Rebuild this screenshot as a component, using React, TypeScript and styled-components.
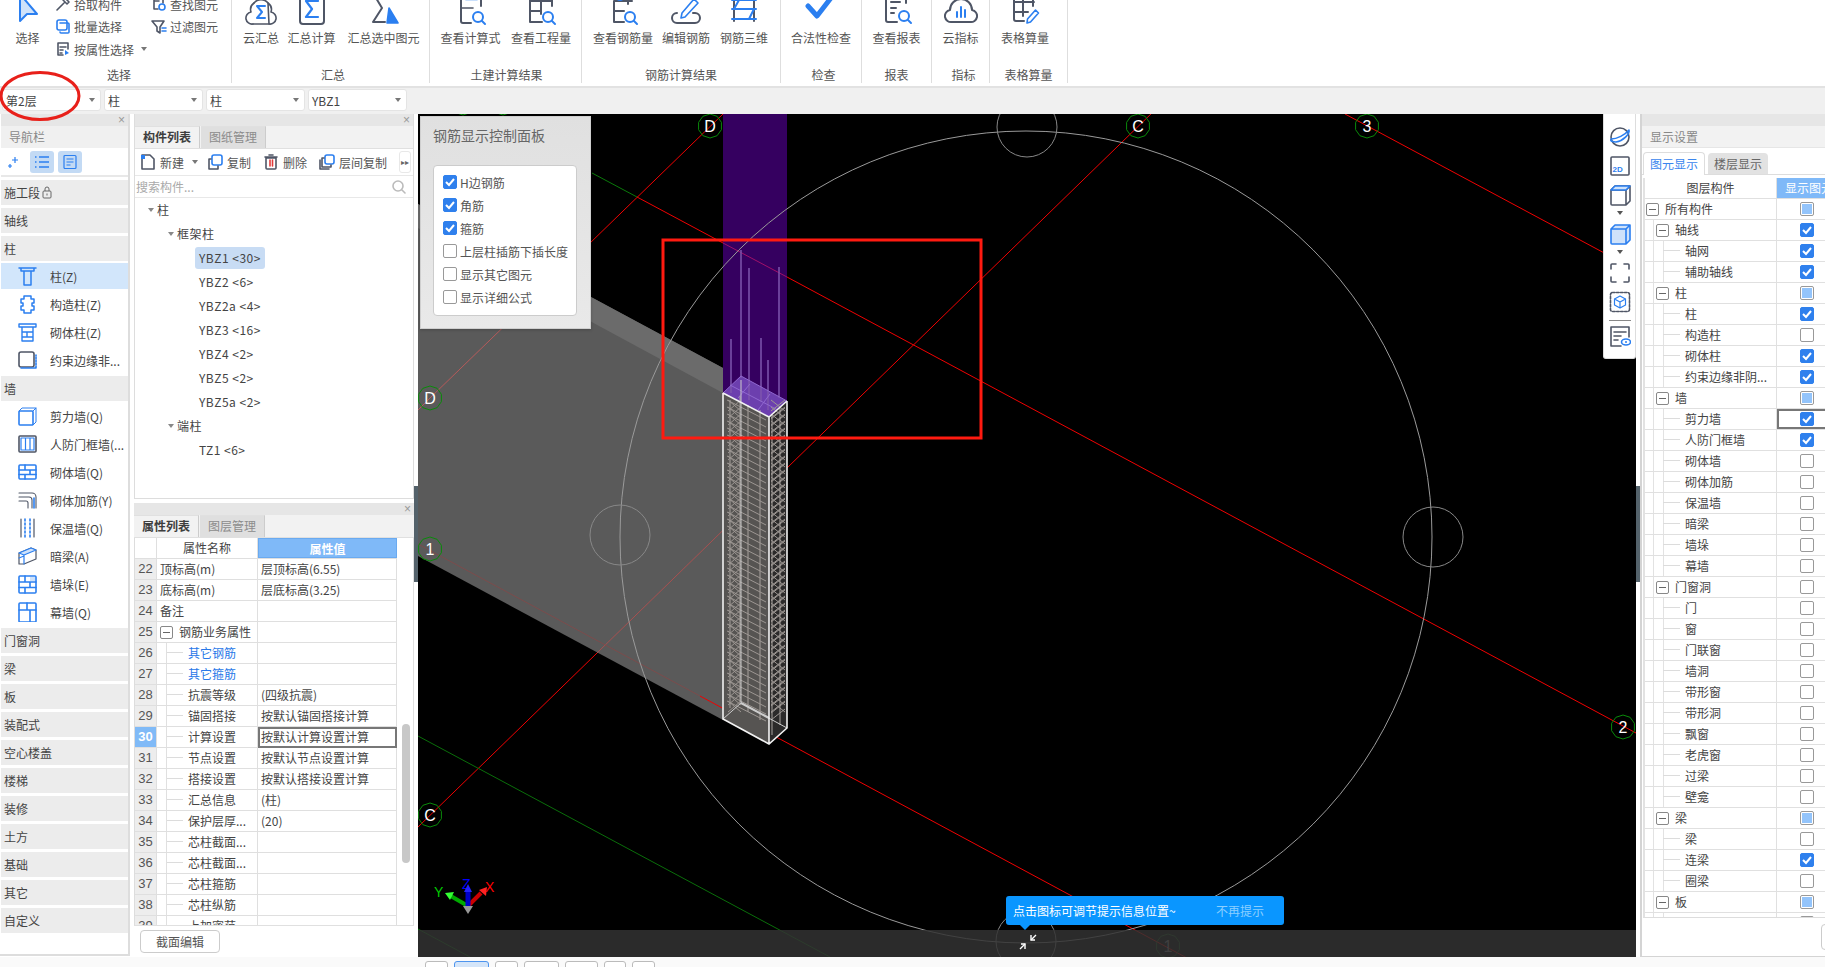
import React from 'react';
import styled, { createGlobalStyle } from 'styled-components';

const DK = '#4f5666';
const BL = '#2b7ff0';
const LB = '#cfe2fa';

const Global = createGlobalStyle`
  html, body { margin: 0; padding: 0; background: #fff; overflow: hidden; }
  * { box-sizing: border-box; }
  body { font-family: "Noto Sans CJK SC", "Liberation Sans", sans-serif; font-size: 12px; color: #4a4a4a; }
`;

const Page = styled.div`
  position: relative; width: 1825px; height: 967px; overflow: hidden;
  display: flex; flex-direction: column; background: #fff;
`;

/* ---------- ribbon ---------- */
const Ribbon = styled.div`
  height: 88px; flex: none; display: flex; background: #fff; border-bottom: 2px solid #e2e2e2; overflow: hidden;
`;
const Group = styled.div<{ $w: number }>`
  width: ${p => p.$w}px; height: 83px; flex: none; display: flex; flex-direction: column; border-right: 1px solid #dedede;
`;
const GroupBody = styled.div<{ $pl?: number }>`
  height: 66px; display: flex; padding-left: ${p => p.$pl ?? 0}px;
`;
const GroupLabel = styled.div<{ $pl?: number }>`
  height: 17px; line-height: 17px; text-align: center; color: #555; padding-left: ${p => p.$pl ?? 0}px;
`;
const BigBtn = styled.div<{ $w: number }>`
  width: ${p => p.$w}px; flex: none; display: flex; flex-direction: column; align-items: center;
`;
const BigIcon = styled.div`
  height: 28px; display: flex; align-items: flex-end; justify-content: center; padding-bottom: 2px;
`;
const BigText = styled.div`
  height: 20px; line-height: 20px; color: #555; white-space: nowrap;
`;
const SmallCol = styled.div<{ $w: number }>`
  width: ${p => p.$w}px; flex: none; margin-top: -7px; display: flex; flex-direction: column;
`;
const SmallRow = styled.div`
  height: 22.6px; display: flex; align-items: center; gap: 3px; color: #555; white-space: nowrap;
`;
const Caret = styled.i`
  display: inline-block; width: 0; height: 0; border: 3px solid transparent; border-top: 4px solid #777; border-bottom: 0;
`;
const SmallCaret = styled(Caret)`
  margin-left: 4px;
`;

/* ---------- selectors ---------- */
const SelectBar = styled.div`
  height: 26px; flex: none; display: flex; align-items: center; gap: 3px; padding: 0 0 2px 2px; background: #f0f0f0;
`;
const Select = styled.div`
  width: 99px; height: 22px; padding: 0 5px 0 3px; display: flex; align-items: center; justify-content: space-between;
  background: #fff; border: 1px solid #e4e4e4; border-radius: 3px; color: #444;
`;
const Annotation = styled.svg`
  position: absolute; left: 0; top: 70px; pointer-events: none;
`;

/* ---------- main ---------- */
const Main = styled.div`
  height: 843px; flex: none; display: flex; background: #fff;
`;
const CloseStrip = styled.div`
  height: 12px; flex: none; background: #e6e6e6; display: flex; align-items: center; justify-content: flex-end; padding-right: 3px;
  color: #999; font-size: 12px; line-height: 12px; font-family: "Liberation Sans", sans-serif;
`;
const NavPanel = styled.div`
  width: 130px; flex: none; display: flex; flex-direction: column; border-right: 2px solid #ddd; border-bottom: 2px solid #ddd; height: 842px; padding-left: 1px;
`;
const NavTitle = styled.div`
  height: 22px; flex: none; padding-left: 8px; line-height: 21px; background: #f0f0f0; color: #888;
`;
const NavTools = styled.div`
  height: 28px; flex: none; margin-top: 1px; display: flex; align-items: center; gap: 4px; padding-left: 1px; border-bottom: 2px solid #e8e8e8;
`;
const NavTool = styled.div<{ $on?: boolean }>`
  width: 24px; height: 22px; border-radius: 3px; display: flex; align-items: center; justify-content: center;
  background: ${p => (p.$on ? '#c3daf4' : 'transparent')};
`;
const NavList = styled.div`
  display: flex; flex-direction: column;
`;
const NavGroup = styled.div`
  height: 25px; margin-top: 3px; padding-left: 3px; line-height: 25px; background: #ececec; color: #444; display: flex; align-items: center; gap: 2px;
`;
const NavItem = styled.div<{ $on?: boolean }>`
  height: 26px; margin-top: 2px; display: flex; align-items: center; gap: 13px; padding-left: 17px;
  background: ${p => (p.$on ? '#d2e6fb' : 'transparent')}; color: #444; white-space: nowrap;
`;
const NavGlyph = styled.div`
  width: 19px; height: 20px; flex: none; display: flex; align-items: center; justify-content: center;
`;

const MidCol = styled.div`
  width: 280px; flex: none; margin-left: 4px; display: flex; flex-direction: column;
`;
const TreePanel = styled.div`
  height: 385px; flex: none; display: flex; flex-direction: column; border-left: 1px solid #ddd; border-right: 1px solid #ddd; border-bottom: 1px solid #ddd;
`;
const Tabs = styled.div`
  height: 23px; flex: none; display: flex; gap: 1px; background: #f2f2f2; border-bottom: 1px solid #e0e0e0;
`;
const Tab = styled.div<{ $on?: boolean }>`
  width: 65px; text-align: center; line-height: 20px; font-weight: ${p => (p.$on ? 700 : 400)};
  color: ${p => (p.$on ? '#3e3e3e' : '#8c8c8c')}; background: ${p => (p.$on ? '#f2f2f2' : '#dfdfdf')};
  border-right: 1px solid #ccc; border-top: 1px solid #e0e0e0;
`;
const TreeTools = styled.div`
  height: 27px; flex: none; display: flex; align-items: center; padding-left: 5px; position: relative; border-bottom: 1px solid #e8e8e8;
`;
const TreeTool = styled.div<{ $w: number }>`
  width: ${p => p.$w}px; flex: none; display: flex; align-items: center; gap: 4px; color: #555;
`;
const MoreBtn = styled.div`
  margin-left: 8px; width: 12px; height: 22px; border: 1px solid #e8e8e8; border-radius: 3px; background: #fff;
  display: flex; align-items: center; justify-content: center; font-size: 8px; color: #666; font-family: "DejaVu Sans", sans-serif;
`;
const SearchRow = styled.div`
  height: 22px; flex: none; display: flex; align-items: center; justify-content: space-between; padding: 0 6px 0 1px; color: #aaa; border-bottom: 1px solid #e8e8e8;
`;
const TreeBody = styled.div`
  margin-top: -1px; display: flex; flex-direction: column; align-items: flex-start;
`;
const TreeRow = styled.div<{ $l: number; $on?: boolean }>`
  height: 22px; margin-top: 2px; line-height: 22px; display: flex; align-items: center; white-space: nowrap; letter-spacing: .5px;
  margin-left: ${p => p.$l}px; padding: 0 ${p => (p.$on ? 4 : 0)}px; border-radius: 3px; background: ${p => (p.$on ? '#c8dcf4' : 'transparent')}; color: #444;
`;
const TreeCaret = styled(Caret)`
  margin-right: 3px; border-width: 4px 3.5px 0; border-top-color: #888;
`;
const PropPanel = styled.div`
  margin-top: 4px; flex: 1; display: flex; flex-direction: column; min-height: 0; border-bottom: 0;
`;
const PropTableWrap = styled.div`
  position: relative; height: 388px; flex: none; overflow: hidden; border: 1px solid #e0e0e0; border-top: 0; border-left: 1px solid #ddd;
`;
const HeadRow = styled.div`
  display: flex; height: 21px; width: 262px; line-height: 20px; border-bottom: 1px solid #dfdfdf;
`;
const Num = styled.div<{ $on?: boolean }>`
  width: 22px; flex: none; text-align: center; background: ${p => (p.$on ? '#80baf7' : '#ededed')};
  color: ${p => (p.$on ? '#fff' : '#555')}; font-weight: ${p => (p.$on ? 700 : 400)}; border-right: 1px solid #dfdfdf; font-family: "Liberation Sans", sans-serif; font-size: 13px;
`;
const HeadNum = styled(Num)`
  background: #fff;
`;
const NameCell = styled.div`
  width: 101px; flex: none; position: relative; display: flex; align-items: center; padding-left: 3px; border-right: 1px solid #dfdfdf; white-space: nowrap; color: #444;
`;
const HeadName = styled(NameCell)`
  justify-content: center; padding: 0;
`;
const ValueCell = styled.div<{ $on?: boolean }>`
  flex: 1; min-width: 0; padding-left: 3px; white-space: nowrap; color: #444; border-right: 1px solid #dfdfdf;
  ${p => p.$on && 'outline: 2px solid #777; outline-offset: -2px; height: 21px;'}
`;
const HeadValue = styled.div`
  flex: 1; text-align: center; background: #7fb9f8; color: #fff; font-weight: 700; border: 1px solid #6aaaf0;
`;
const PropRowBox = styled.div`
  display: flex; width: 262px; height: 21px; line-height: 20px; border-bottom: 1px solid #dfdfdf;
`;
const Box = styled.span`
  width: 13px; height: 13px; flex: none; border: 1px solid #888; border-radius: 2px; background: #fff; display: inline-flex; align-items: center; justify-content: center;
  &::after { content: ''; width: 7px; height: 1px; background: #666; }
`;
const PropBox = styled(Box)`
  margin-right: 6px;
`;
const Tick = styled.span`
  position: absolute; left: 9px; top: 0; bottom: 0; width: 17px; border-left: 1px solid #e0e0e0;
  &::after { content: ''; position: absolute; left: 0; top: 9px; width: 16px; border-top: 1px solid #dcdcdc; }
`;
const ChildName = styled.span<{ $blue?: boolean }>`
  margin-left: 28px; color: ${p => (p.$blue ? '#2878e8' : '#444')};
`;
const ScrollThumb = styled.div`
  position: absolute; right: 3px; top: 186px; width: 8px; height: 139px; border-radius: 4px; background: #c8c8c8;
`;
const BtnBar = styled.div`
  height: 30px; flex: none; padding: 4px 0 0 6px;
`;
const GhostBtn = styled.div`
  width: 80px; height: 23px; line-height: 21px; text-align: center; background: #fff; border: 1px solid #ccc; border-radius: 4px; color: #555;
`;

const Splitter = styled.div`
  width: 4px; flex: none; background: #fff; display: flex; align-items: flex-start; position: relative;
`;
const SplitHandle = styled.div`
  position: absolute; left: 0; top: 372px; width: 4px; height: 96px; background: #54626b;
`;

const Canvas = styled.div`
  width: 1218px; flex: none; position: relative; background: #000; overflow: hidden;
`;
const Scene = styled.svg`
  position: absolute; inset: 0; display: block;
`;
const Band = styled.div`
  position: absolute; left: 0; right: 0; bottom: 0; height: 27px; background: rgba(50, 50, 50, .85);
`;
const ControlPanel = styled.div`
  position: absolute; left: 2px; top: 2px; width: 171px; height: 213px; padding: 8px 13px 0 12px;
  background: linear-gradient(180deg, #e0e0e0, #e9e9e9); border: 1px solid #cfcfcf; box-shadow: 0 1px 3px rgba(0, 0, 0, .2);
`;
const PanelTitle = styled.div`
  font-size: 14px; line-height: 20px; color: #666;
`;
const CheckBoxList = styled.div`
  margin-top: 20px; height: 151px; padding: 6px 0 0 9px; background: #fff; border: 1px solid #ccc; border-radius: 4px;
  display: flex; flex-direction: column; gap: 3px;
`;
const CheckRow = styled.div`
  height: 20px; display: flex; align-items: center; gap: 3px; white-space: nowrap; color: #555;
`;
const CheckBox = styled.span<{ $s: 'on' | 'off' | 'half' }>`
  width: 14px; height: 14px; flex: none; display: inline-flex; align-items: center; justify-content: center; border-radius: 2px;
  background: ${p => (p.$s === 'on' ? '#2f80ed' : '#fff')}; border: 1px solid ${p => (p.$s === 'on' ? '#2f80ed' : '#999')};
  ${p => p.$s === 'half' && '&::after { content: ""; width: 10px; height: 10px; background: #93c4fb; }'}
`;
const Tip = styled.div`
  position: absolute; left: 588px; top: 782px; width: 278px; height: 29px; padding: 0 20px 0 7px; display: flex; align-items: center; justify-content: space-between;
  background: #0a96ff; border-radius: 3px; color: #fff; white-space: nowrap;
  &::after { content: ''; position: absolute; left: 14px; bottom: -5px; border: 5px solid transparent; border-top: 5px solid #0a96ff; border-bottom: 0; }
`;
const TipMute = styled.span`
  color: #8ccfff;
`;
const ViewBar = styled.div`
  position: absolute; right: 0; top: 0; width: 33px; height: 245px; padding-top: 12px; display: flex; flex-direction: column; align-items: center;
  background: #fff; border: 1px solid #ddd; border-top: 0; border-radius: 0 0 3px 3px;
`;
const ViewBtn = styled.div`
  height: 22px; width: 100%; margin-bottom: 7px; display: flex; align-items: center; justify-content: center;
`;
const ViewCaret = styled(Caret)`
  margin: -2px 0 8px; flex: none; border-width: 4px 3.5px 0; border-top-color: #555;
`;
const ViewRule = styled.div`
  width: 22px; height: 1px; margin: 0 0 4px; flex: none; background: #888;
`;

const RightPanel = styled.div`
  width: 185px; flex: none; height: 843px; display: flex; flex-direction: column; border-left: 2px solid #d4d4d4; border-bottom: 1px solid #d4d4d4; position: relative;
`;
const RightTitle = styled.div`
  height: 22px; flex: none; padding-left: 8px; line-height: 22px; background: #f2f2f2; color: #888; border-bottom: 1px solid #e6e6e6;
`;
const RightTabs = styled.div`
  height: 27px; flex: none; display: flex; gap: 3px; padding: 4px 0 0 1px; border-bottom: 1px solid #ddd;
`;
const RightTab = styled.div<{ $on?: boolean }>`
  width: ${p => (p.$on ? 62 : 60)}px; height: ${p => (p.$on ? 23 : 21)}px; text-align: center; line-height: 22px; border-radius: 4px 4px 0 0; margin-top: ${p => (p.$on ? 0 : 1)}px;
  background: ${p => (p.$on ? '#fff' : '#e2e2e2')}; color: ${p => (p.$on ? '#3a86ee' : '#666')};
  border: ${p => (p.$on ? '1px solid #ddd' : '0')}; border-bottom: 0;
`;
const LayerWrap = styled.div`
  margin: 3px 0 0 1px; width: 184px; height: 740px; flex: none; overflow: hidden; border-left: 2px solid #e2e2e2; border-bottom: 1px solid #ddd;
`;
const LayerHead = styled.div`
  display: flex; height: 21px; line-height: 20px; border-bottom: 1px solid #e0e0e0;
`;
const LayerHeadName = styled.div`
  width: 132px; flex: none; text-align: center; border-right: 1px solid #e0e0e0; color: #444;
`;
const LayerHeadValue = styled.div`
  width: 60px; flex: none; padding-left: 8px; background: #7fb9f8; color: #fff; white-space: nowrap;
`;
const LayerRowBox = styled.div`
  display: flex; height: 21px; line-height: 20px; border-bottom: 1px solid #e0e0e0;
`;
const LayerName = styled.div<{ $l: number }>`
  width: 132px; flex: none; position: relative; display: flex; align-items: center; white-space: nowrap; color: #444; border-right: 1px solid #e0e0e0;
  padding-left: ${p => [1, 11, 40][p.$l]}px;
`;
const LayerBox = styled(Box)`
  margin-right: 6px;
`;
const LayerGuide = styled.span<{ $x: number; $tick?: boolean }>`
  position: absolute; left: ${p => p.$x}px; top: 0; bottom: 0; width: 1px; background: #e2e2e2;
  ${p => p.$tick && `&::after { content: ''; position: absolute; left: 0; top: 9px; width: 17px; height: 1px; background: #dcdcdc; }`}
`;
const LayerCheckCell = styled.div<{ $sel?: boolean }>`
  width: 60px; flex: none; padding-left: 23px; display: flex; align-items: center;
  ${p => p.$sel && 'outline: 2px solid #777; outline-offset: -2px;'}
`;
const CornerBtn = styled.div`
  position: absolute; right: -20px; bottom: 6px; width: 24px; height: 26px; border: 1px solid #ccc; border-radius: 4px;
`;
const Footer = styled.div`
  height: 10px; flex: none; background: #fafafa; padding: 4px 0 0 425px; display: flex; gap: 6px; overflow: hidden;
`;
const FootBtn = styled.div<{ $w: number; $on?: boolean }>`
  width: ${p => p.$w}px; height: 20px; flex: none; border: 1px solid ${p => (p.$on ? '#4d94ee' : '#bbb')}; border-radius: 3px; background: ${p => (p.$on ? '#d4e5f9' : '#fff')};
`;

/* ---------- icons ---------- */
type S = { w?: number; h?: number; children: React.ReactNode; vb?: string };
const Ic = ({ w = 34, h = 30, vb, children }: S) => (
  <svg width={w} height={h} viewBox={vb ?? `0 0 ${w} ${h}`} fill="none" strokeWidth={1.6} strokeLinecap="round" strokeLinejoin="round">{children}</svg>
);
const Glass = ({ x, y, r = 5 }: { x: number; y: number; r?: number }) => (
  <g stroke={BL} strokeWidth={2}><circle cx={x} cy={y} r={r} /><path d={`M${x + r - 1} ${y + r - 1}l3 3`} /></g>
);

const SelectIco = () => (
  <Ic w={24} h={30}><path d="M4 -2V25l7-7h10z" fill={LB} stroke={BL} strokeWidth={2} /></Ic>
);
const CloudSum = () => (
  <Ic><path d="M9 28a6 6 0 0 1-2-12 8 8 0 0 1 3-9M24 7a8 8 0 0 1 3 9 6 6 0 0 1-2 12z" stroke={DK} /><path d="M9 28h16M10 7a9 9 0 0 1 14 0" stroke={DK} /><path d="M21 10h-8l5 6-5 6h8" stroke={BL} strokeWidth={2} /></Ic>
);
const BoxSum = () => (
  <Ic><rect x="5" y="-4" width="24" height="32" rx="3" stroke={DK} strokeWidth={2} /><path d="M23 5H11l6 8-6 8h12" stroke={BL} strokeWidth={2.2} /></Ic>
);
const SumSel = () => (
  <Ic><path d="M20 -3H6l9 15-9 14h12" stroke={DK} strokeWidth={2} /><path d="M22 12l9 15H20z" fill={BL} stroke={BL} /></Ic>
);
const CalcSheet = () => (
  <Ic><path d="M7 -4v29a2 2 0 0 0 2 2h8M27 -4v14" stroke={DK} strokeWidth={2} /><path d="M12 3h12M12 0h12" stroke={BL} strokeDasharray="2 1" strokeWidth={2.4} /><path d="M7 12h12" stroke={DK} /><Glass x={24} y={21} /></Ic>
);
const GridGlass = () => (
  <Ic><path d="M6 -4v30h12M17 -4v22M28 -4v14M6 5h22M6 15h10" stroke={DK} strokeWidth={2} /><Glass x={24} y={21} /></Ic>
);
const RebarAmt = () => (
  <Ic><path d="M8 5v21h10M8 15h10M22 -4v12M8 5h18" stroke={DK} strokeWidth={2} /><circle cx="14" cy="0" r="4" stroke={BL} strokeWidth={2} /><Glass x={24} y={21} /></Ic>
);
const EditRebar = () => (
  <Ic><path d="M8 17a5 5 0 0 0 0 10h18a5 5 0 0 0 0-10h-2" stroke={DK} strokeWidth={2} /><path d="M12 22l1-5L25 3l4 4-13 14z" stroke={BL} strokeWidth={1.6} /></Ic>
);
const Rebar3d = () => (
  <Ic><path d="M7 -4v29M27 -4v29" stroke={DK} strokeWidth={2} /><path d="M5 4h24M5 13h24M5 23h24M7 13L12 4M22 23l5-10" stroke={BL} strokeWidth={2} /></Ic>
);
const CheckBig = () => (
  <Ic><path d="M4 10l9 10L30 -2" stroke={BL} strokeWidth={5} /></Ic>
);
const ReportIco = () => (
  <Ic><path d="M18 -4H6v28a2 2 0 0 0 2 2h9M26 -2v9" stroke={DK} strokeWidth={2} /><path d="M22 -4v5h5" stroke={DK} /><path d="M11 6h9M11 12h5M11 17h3" stroke={DK} strokeWidth={2} /><Glass x={24} y={20} /></Ic>
);
const CloudIdx = () => (
  <Ic><path d="M8 26a6 6 0 0 1-2-12 11 11 0 0 1 22 0 6 6 0 0 1-2 12z" stroke={DK} strokeWidth={2} /><path d="M13 16v5M17 11v10M21 14v7" stroke={BL} strokeWidth={2} /></Ic>
);
const TableEdit = () => (
  <Ic><path d="M6 -4v27a2 2 0 0 0 2 2h8M15 -4v24M25 -4v14M6 6h20M6 16h14" stroke={DK} strokeWidth={2} /><path d="M19 27l.5-4 8-9 3 3-8 9z" stroke={BL} /></Ic>
);

const Sm = ({ children }: { children: React.ReactNode }) => <Ic w={16} h={16}>{children}</Ic>;
const SmallIcons: Record<string, React.ReactNode> = {
  pick: <Sm><path d="M2 14l7-7M8 4l4 4M10 2l4 4-2 2-4-4z" stroke={DK} /></Sm>,
  batch: <Sm><rect x="2" y="1" width="10" height="10" rx="2" stroke={BL} /><path d="M5 4h8a1 1 0 0 1 1 1v8a1 1 0 0 1-1 1H6a1 1 0 0 1-1-1" stroke={BL} /></Sm>,
  attr: <Sm><path d="M13 8V2H3v12h5M5 6h6M5 9h3M5 12h2" stroke={DK} /><path d="M10 9l4 3-4 2z" fill={BL} /></Sm>,
  find: <Sm><path d="M3 1v12h4M3 5h5M12 1v6M3 1h9" stroke={DK} /><circle cx="11" cy="11" r="3" stroke={BL} /></Sm>,
  filter: <Sm><path d="M1 2h12L9 8v6L6 12V8z" stroke={DK} /><path d="M11 9h4M11 12h4" stroke={BL} /></Sm>,
  add: <Sm><path d="M2 1h8l4 4v10H2z" stroke={DK} /><path d="M1 1h4v4H1z" fill={BL} /></Sm>,
  copy: <Sm><rect x="5" y="1" width="10" height="10" rx="2" stroke={BL} /><path d="M4 5H2v10h9v-3" stroke={DK} /></Sm>,
  del: <Sm><path d="M3 4h10v10a1 1 0 0 1-1 1H4a1 1 0 0 1-1-1zM2 3h12M6 1h4" stroke={DK} /><path d="M7 6v6M9.5 6v6" stroke="#e23b3b" /></Sm>,
  floor: <Sm><rect x="6" y="1" width="9" height="9" rx="2" stroke={BL} /><path d="M5 4H3v9h9v-2M1 6v9h9" stroke={DK} /></Sm>,
  search: <Sm><circle cx="7" cy="7" r="5" stroke="#bbb" /><path d="M11 11l3 3" stroke="#bbb" /></Sm>,
};

const N = ({ children }: { children: React.ReactNode }) => <Ic w={19} h={20}>{children}</Ic>;
const NavIcons: Record<string, React.ReactNode> = {
  zhu: <N><path d="M1 2h17M3 2v3h13V2M6 5v14h7V5" stroke={BL} strokeWidth={1.5} /></N>,
  gz: <N><path d="M6 2h7v3h3v4h-2v3h2v4h-3v3H6v-3H3v-4h2V9H3V5h3z" stroke={BL} strokeWidth={1.5} /></N>,
  qt: <N><path d="M1 2h17v3H1zM4 5v14h11V5M4 10h11M4 15h11M9 10v5" stroke={BL} strokeWidth={1.4} /></N>,
  yf: <N><rect x="1" y="2" width="15" height="15" rx="2" stroke={DK} /><path d="M3 18h15V5" stroke={BL} strokeDasharray="2 1" /></N>,
  jl: <N><rect x="1" y="5" width="14" height="14" rx="1" stroke={BL} /><path d="M1 5l3-3h14v14l-3 3M15 5l3-3" stroke={BL} strokeWidth={1} /></N>,
  rf: <N><rect x="1" y="2" width="17" height="16" rx="1" stroke={DK} /><path d="M3 4h13v12H3zM7.5 4v12M12 4v12" stroke={BL} strokeWidth={1.2} /></N>,
  qq: <N><rect x="1" y="3" width="17" height="14" rx="1" stroke={BL} /><path d="M1 8h17M1 12.5h17M7 3v5M12 8v4.500M7 12.500V17" stroke={BL} /></N>,
  jj: <N><path d="M1 3h13a4 4 0 0 1 4 4v11M1 7h10a3 3 0 0 1 3 3v8M1 11h7a2 2 0 0 1 2 2v5" stroke={DK} strokeWidth={1.1} /><path d="M16 8v10" stroke={BL} /></N>,
  bw: <N><path d="M3 1v18M16 1v18" stroke={DK} strokeWidth={1.2} /><path d="M7 1v18M12 1v18" stroke={BL} strokeDasharray="2 2" /></N>,
  al: <N><path d="M1 7l12-5 5 2v9l-12 5H1z" stroke={DK} strokeWidth={1.2} /><path d="M1 7l12-5 5 2-12 5zM6 9v9M1 12l5-2" stroke={BL} strokeWidth={1.2} fill={LB} /></N>,
  qd: <N><rect x="1" y="2" width="17" height="17" rx="1" stroke={BL} /><path d="M1 8h17M1 13.500h17M7 2v6M12 8v5.500M7 13.500V19" stroke={BL} /><rect x="12" y="3" width="5" height="4" fill={LB} /></N>,
  mq: <N><rect x="1" y="1" width="17" height="19" rx="1" stroke={BL} /><path d="M1 8h17M9 1v7M12 8v12" stroke={BL} /></N>,
};

const Mini = ({ children }: { children: React.ReactNode }) => <Ic w={22} h={22}>{children}</Ic>;
const ViewIcons = [
  <Mini key="0"><ellipse cx="11" cy="11" rx="9" ry="9" stroke={DK} /><path d="M2 13c6 0 14-4 18-9 1 4-6 11-13 12-3 0-6-1-5-3z" stroke={BL} /></Mini>,
  <Ic key="1" w={22} h={20}><rect x="2" y="1" width="18" height="18" rx="1" stroke={DK} /></Ic>,
];
const TwoD = styled.span`
  position: absolute; font: 700 8px/8px "Liberation Sans", sans-serif; color: ${BL};
  left: 4px; top: 10px;
`;
const TwoDWrap = styled.div`
  position: relative; width: 22px; height: 20px;
`;
const LockIcon = () => (
  <svg width="10" height="13" viewBox="0 0 10 13" fill="none" stroke="#666" strokeWidth="1">
    <rect x="1" y="5" width="8" height="7" rx="1" /><path d="M3 5V3a2 2 0 0 1 4 0v2M5 7.500v2" />
  </svg>
);

/* ---------- scene ---------- */
const Bubble = ({ x, y, t, dim }: { x: number; y: number; t?: string; dim?: boolean }) => {
  const pts = Array.from({ length: 10 }, (_, i) => {
    const a = (i * Math.PI) / 5 + Math.PI / 10;
    return `${(x + 12 * Math.cos(a)).toFixed(1)},${(y + 12 * Math.sin(a)).toFixed(1)}`;
  }).join(' ');
  return (
    <g>
      <polygon points={pts} fill="none" stroke={dim ? '#1d5a1d' : '#0a8a0a'} strokeWidth={1} />
      {t && <text x={x} y={y + 6} textAnchor="middle" fontFamily="Liberation Sans, sans-serif" fontSize={16} fill={dim ? '#888' : '#fff'}>{t}</text>}
    </g>
  );
};

const meshPath = (() => {
  const out: string[] = [];
  for (let y = 400; y < 708; y += 7) {
    out.push(`M727 ${y}L766 ${y + 20}`);
    out.push(`M771 ${y + 19}L785 ${y + 8}`);
    out.push(`M728 ${y}L741 ${y + 11}M741 ${y}L728 ${y + 11}`);
    out.push(`M771 ${y}L785 ${y + 11}M785 ${y}L771 ${y + 11}`);
  }
  return out.join('');
})();

const Scene3D = () => (
  <Scene width={1218} height={843} viewBox="418 114 1218 843">
    <polygon points="418,204 723,368 723,720 418,556" fill="#5a5a5a" />
    <polygon points="418,204 723,368 723,393 418,228" fill="#6b6b6b" />
    <rect x="723" y="114" width="64" height="290" fill="#350060" />
    {/* axes */}
    <g fill="none" strokeWidth={1}>
      <path d="M723 114L520 311" stroke="#f00000" />
      <path d="M520 311L430 398 418 410" stroke="#b65a5a" />
      <path d="M1155 110L787 468" stroke="#f00000" />
      <path d="M787 468L597 653" stroke="#a85050" />
      <path d="M597 653L418 827" stroke="#f00000" />
      <path d="M1345 114L1636 270" stroke="#f00000" />
      <path d="M637 197L723 243" stroke="#f00000" />
      <path d="M723 243L787 277" stroke="#a0106a" />
      <path d="M787 277L1636 733" stroke="#f00000" />
      <path d="M592 173L637 197" stroke="#0a7a0a" />
      <path d="M418 544L700 696" stroke="#7c4c4c" />
      <path d="M700 696L1200 965" stroke="#f00000" />
      <path d="M418 736L830 957" stroke="#0a6e0a" />
      <path d="M418 929L470 957" stroke="#0a6e0a" />
    </g>
    {/* circles */}
    <g fill="none" stroke="#9a9a9a" strokeWidth={1}>
      <circle cx="1026" cy="537" r="406" />
      <circle cx="1027" cy="127" r="30" stroke="#888" />
      <circle cx="620" cy="535" r="30" stroke="#888" />
      <circle cx="1433" cy="537" r="30" stroke="#888" />
      <circle cx="1026" cy="941" r="30" stroke="#888" />
    </g>
    {/* column */}
    <polygon points="723,393 769,417 769,744 723,719" fill="#565452" />
    <polygon points="769,417 787,401 787,728 769,744" fill="#2b2a2a" />
    <polygon points="723,393 741,376 787,401 769,417" fill="#6c3fae" />
    <g stroke="#7d55ad" strokeWidth={1.5}>
      <path d="M731 339V393M741 250V378M749 268V400M761 338V402M768 360V410M779 267V398" />
    </g>
    <path d="M723 393L741 376 787 401M730 385L776 409M750 384L738 398M770 394L758 410" stroke="#9068d0" strokeWidth={1} fill="none" />
    <path d="M730 400V708M740 396V702M748 405V712M760 410V720M772 415V735M780 408V725" stroke="#a8a29e" strokeWidth={1} fill="none" />
    <path d={meshPath} stroke="#9d9793" strokeWidth={1} fill="none" />
    <path d="M741 703V380M723 719L741 703 787 728" stroke="#ccc" strokeWidth={1} fill="none" />
    <path d="M741 703L769 718" stroke="#ccc" strokeWidth={2} fill="none" />
    <path d="M723 393L769 417 787 401M723 393V719L769 744 787 728V401M769 417V744" stroke="#f2f2f2" strokeWidth={1.6} fill="none" />
    {/* red selection */}
    <rect x="663" y="240" width="318" height="198" fill="none" stroke="#ff1a10" strokeWidth={3} />
    <Bubble x={463} y={103} />
    <Bubble x={503} y={103} />
    <Bubble x={710} y={126} t="D" />
    <Bubble x={1138} y={126} t="C" />
    <Bubble x={1367} y={126} t="3" />
    <Bubble x={430} y={398} t="D" />
    <Bubble x={430} y={549} t="1" />
    <Bubble x={430} y={815} t="C" />
    <Bubble x={1623} y={727} t="2" />
    <Bubble x={1168} y={946} t="1" dim />
    {/* gizmo */}
    <g fontFamily="Liberation Sans, sans-serif" fontSize={14}>
      <text x="434" y="897" fill="#0c0">Y</text>
      <text x="462" y="889" fill="#00f">Z</text>
      <text x="485" y="892" fill="#f00">X</text>
    </g>
    <path d="M468 906L449 895" stroke="#0a0" strokeWidth={4} />
    <path d="M445 893l9-1-4 8z" fill="#3f3" />
    <path d="M468 906L481 893" stroke="#c00" strokeWidth={4} />
    <path d="M487 887l-1 9-7-6z" fill="#f22" />
    <path d="M468 906V892" stroke="#00c" strokeWidth={5} />
    <path d="M468 884l4 8h-8z" fill="#22f" />
    <path d="M463 906h10l-5 8z" fill="#999" />
  </Scene>
);

const Collapse = () => (
  <svg width="20" height="18" viewBox="0 0 20 18" fill="none" stroke="#fff" strokeWidth="1.4">
    <path d="M13 2v5h4M7 16v-5H3" /><path d="M13 7l5-5M7 11l-5 5" />
  </svg>
);
const CollapseAt = styled.div`
  position: absolute; left: 600px; top: 819px; width: 20px; height: 18px;
`;

/* ---------- data ---------- */
const navData: (string | [string, string, boolean?])[] = [
  '施工段', '轴线', '柱', ['柱(Z)', 'zhu', true], ['构造柱(Z)', 'gz'], ['砌体柱(Z)', 'qt'], ['约束边缘非...', 'yf'],
  '墙', ['剪力墙(Q)', 'jl'], ['人防门框墙(...', 'rf'], ['砌体墙(Q)', 'qq'], ['砌体加筋(Y)', 'jj'], ['保温墙(Q)', 'bw'], ['暗梁(A)', 'al'], ['墙垛(E)', 'qd'], ['幕墙(Q)', 'mq'],
  '门窗洞', '梁', '板', '装配式', '空心楼盖', '楼梯', '装修', '土方', '基础', '其它', '自定义',
];

const treeData: [string, number, boolean?, boolean?][] = [
  ['柱', 13, true], ['框架柱', 33, true], ['YBZ1 <30>', 60, false, true], ['YBZ2 <6>', 64], ['YBZ2a <4>', 64], ['YBZ3 <16>', 64],
  ['YBZ4 <2>', 64], ['YBZ5 <2>', 64], ['YBZ5a <2>', 64], ['端柱', 33, true], ['TZ1 <6>', 64],
];

const propData: [number, string, string, number, boolean?][] = [
  [22, '顶标高(m)', '层顶标高(6.55)', 0], [23, '底标高(m)', '层底标高(3.25)', 0], [24, '备注', '', 0], [25, '钢筋业务属性', '', 2],
  [26, '其它钢筋', '', 1, true], [27, '其它箍筋', '', 1, true], [28, '抗震等级', '(四级抗震)', 1], [29, '锚固搭接', '按默认锚固搭接计算', 1],
  [30, '计算设置', '按默认计算设置计算', 1], [31, '节点设置', '按默认节点设置计算', 1], [32, '搭接设置', '按默认搭接设置计算', 1], [33, '汇总信息', '(柱)', 1],
  [34, '保护层厚...', '(20)', 1], [35, '芯柱截面...', '', 1], [36, '芯柱截面...', '', 1], [37, '芯柱箍筋', '', 1], [38, '芯柱纵筋', '', 1], [39, '上加密范...', '', 1],
];

type St = 'on' | 'off' | 'half';
const layerData: [string, number, St][] = [
  ['所有构件', 0, 'half'], ['轴线', 1, 'on'], ['轴网', 2, 'on'], ['辅助轴线', 2, 'on'], ['柱', 1, 'half'], ['柱', 2, 'on'], ['构造柱', 2, 'off'], ['砌体柱', 2, 'on'],
  ['约束边缘非阴...', 2, 'on'], ['墙', 1, 'half'], ['剪力墙', 2, 'on'], ['人防门框墙', 2, 'on'], ['砌体墙', 2, 'off'], ['砌体加筋', 2, 'off'], ['保温墙', 2, 'off'], ['暗梁', 2, 'off'],
  ['墙垛', 2, 'off'], ['幕墙', 2, 'off'], ['门窗洞', 1, 'off'], ['门', 2, 'off'], ['窗', 2, 'off'], ['门联窗', 2, 'off'], ['墙洞', 2, 'off'], ['带形窗', 2, 'off'],
  ['带形洞', 2, 'off'], ['飘窗', 2, 'off'], ['老虎窗', 2, 'off'], ['过梁', 2, 'off'], ['壁龛', 2, 'off'], ['梁', 1, 'half'], ['梁', 2, 'off'], ['连梁', 2, 'on'],
  ['圈梁', 2, 'off'], ['板', 1, 'half'], ['现浇板', 2, 'off'],
];

const Tickmark = () => (
  <svg width="10" height="10" viewBox="0 0 10 10" fill="none" stroke="#fff" strokeWidth="2"><path d="M1 5l3 3 5-6" /></svg>
);
const Check = ({ s }: { s: St }) => <CheckBox $s={s}>{s === 'on' && <Tickmark />}</CheckBox>;

const Big = ({ w, icon, text }: { w: number; icon: React.ReactNode; text: string }) => (
  <BigBtn $w={w}><BigIcon>{icon}</BigIcon><BigText>{text}</BigText></BigBtn>
);

export default function App() {
  return (
    <Page>
      <Global />
      <Ribbon>
        <Group $w={232}>
          <GroupBody>
            <Big w={55} icon={<SelectIco />} text="选择" />
            <SmallCol $w={96}>
              <SmallRow>{SmallIcons.pick}拾取构件</SmallRow>
              <SmallRow>{SmallIcons.batch}批量选择</SmallRow>
              <SmallRow>{SmallIcons.attr}按属性选择<SmallCaret /></SmallRow>
            </SmallCol>
            <SmallCol $w={80}>
              <SmallRow>{SmallIcons.find}查找图元</SmallRow>
              <SmallRow>{SmallIcons.filter}过滤图元</SmallRow>
            </SmallCol>
          </GroupBody>
          <GroupLabel $pl={7}>选择</GroupLabel>
        </Group>
        <Group $w={198}>
          <GroupBody $pl={4}>
            <Big w={50} icon={<CloudSum />} text="云汇总" />
            <Big w={51} icon={<BoxSum />} text="汇总计算" />
            <Big w={93} icon={<SumSel />} text="汇总选中图元" />
          </GroupBody>
          <GroupLabel $pl={5}>汇总</GroupLabel>
        </Group>
        <Group $w={152}>
          <GroupBody>
            <Big w={81} icon={<CalcSheet />} text="查看计算式" />
            <Big w={60} icon={<GridGlass />} text="查看工程量" />
          </GroupBody>
          <GroupLabel $pl={2}>土建计算结果</GroupLabel>
        </Group>
        <Group $w={199}>
          <GroupBody $pl={11}>
            <Big w={60} icon={<RebarAmt />} text="查看钢筋量" />
            <Big w={66} icon={<EditRebar />} text="编辑钢筋" />
            <Big w={50} icon={<Rebar3d />} text="钢筋三维" />
          </GroupBody>
          <GroupLabel>钢筋计算结果</GroupLabel>
        </Group>
        <Group $w={81}>
          <GroupBody><Big w={80} icon={<CheckBig />} text="合法性检查" /></GroupBody>
          <GroupLabel $pl={5}>检查</GroupLabel>
        </Group>
        <Group $w={70}>
          <GroupBody><Big w={69} icon={<ReportIco />} text="查看报表" /></GroupBody>
          <GroupLabel>报表</GroupLabel>
        </Group>
        <Group $w={58}>
          <GroupBody><Big w={57} icon={<CloudIdx />} text="云指标" /></GroupBody>
          <GroupLabel $pl={6}>指标</GroupLabel>
        </Group>
        <Group $w={78}>
          <GroupBody><Big w={70} icon={<TableEdit />} text="表格算量" /></GroupBody>
          <GroupLabel>表格算量</GroupLabel>
        </Group>
      </Ribbon>

      <SelectBar>
        {['第2层', '柱', '柱', 'YBZ1'].map((t, i) => <Select key={i}>{t}<Caret /></Select>)}
      </SelectBar>
      <Annotation width="84" height="52" viewBox="0 0 84 52">
        <ellipse cx="40" cy="26" rx="39" ry="23.500" fill="none" stroke="#e8201a" strokeWidth="3" />
      </Annotation>

      <Main>
        <NavPanel>
          <CloseStrip>×</CloseStrip>
          <NavTitle>导航栏</NavTitle>
          <NavTools>
            <NavTool><svg width="14" height="14" viewBox="0 0 14 14" fill="none" stroke={BL} strokeWidth="1.2"><path d="M8 2v6M5 5h6M3 9v4M1 11h4" /></svg></NavTool>
            <NavTool $on><svg width="16" height="14" viewBox="0 0 16 14" fill="none" stroke={BL} strokeWidth="1.3"><path d="M5 2h10M5 7h10M5 12h10M1 2h1.500M1 7h1.500M1 12h1.500" /></svg></NavTool>
            <NavTool $on><svg width="16" height="16" viewBox="0 0 16 16" fill="none" stroke={BL} strokeWidth="1.2"><rect x="2" y="1.500" width="12" height="13" rx="1" /><path d="M4.500 5h7M4.500 8h7M4.500 11h4" /></svg></NavTool>
          </NavTools>
          <NavList>
            {navData.map((n, i) => typeof n === 'string'
              ? <NavGroup key={i}>{n}{i === 0 && <LockIcon />}</NavGroup>
              : <NavItem key={i} $on={n[2]}><NavGlyph>{NavIcons[n[1]]}</NavGlyph>{n[0]}</NavItem>)}
          </NavList>
        </NavPanel>

        <MidCol>
          <TreePanel>
            <CloseStrip>×</CloseStrip>
            <Tabs><Tab $on>构件列表</Tab><Tab>图纸管理</Tab></Tabs>
            <TreeTools>
              <TreeTool $w={67}>{SmallIcons.add}<span>新建</span><SmallCaret /></TreeTool>
              <TreeTool $w={56}>{SmallIcons.copy}复制</TreeTool>
              <TreeTool $w={56}>{SmallIcons.del}删除</TreeTool>
              <TreeTool $w={72}>{SmallIcons.floor}层间复制</TreeTool>
              <MoreBtn>▸▸</MoreBtn>
            </TreeTools>
            <SearchRow>搜索构件...{SmallIcons.search}</SearchRow>
            <TreeBody>
              {treeData.map(([t, l, c, on], i) => <TreeRow key={i} $l={l} $on={on}>{c && <TreeCaret />}{t}</TreeRow>)}
            </TreeBody>
          </TreePanel>
          <PropPanel>
            <CloseStrip>×</CloseStrip>
            <Tabs><Tab $on>属性列表</Tab><Tab>图层管理</Tab></Tabs>
            <PropTableWrap>
              <HeadRow><HeadNum /><HeadName>属性名称</HeadName><HeadValue>属性值</HeadValue></HeadRow>
              {propData.map(([n, name, val, kind, blue]) => (
                <PropRowBox key={n}>
                  <Num $on={n === 30}>{n}</Num>
                  <NameCell>
                    {kind === 2 && <PropBox />}
                    {kind === 1 && <Tick />}
                    {kind === 1 ? <ChildName $blue={blue}>{name}</ChildName> : name}
                  </NameCell>
                  <ValueCell $on={n === 30}>{val}</ValueCell>
                </PropRowBox>
              ))}
              <ScrollThumb />
            </PropTableWrap>
            <BtnBar><GhostBtn>截面编辑</GhostBtn></BtnBar>
          </PropPanel>
        </MidCol>

        <Splitter><SplitHandle /></Splitter>

        <Canvas>
          <Scene3D />
          <Band />
          <CollapseAt><Collapse /></CollapseAt>
          <ControlPanel>
            <PanelTitle>钢筋显示控制面板</PanelTitle>
            <CheckBoxList>
              <CheckRow><Check s="on" />H边钢筋</CheckRow>
              <CheckRow><Check s="on" />角筋</CheckRow>
              <CheckRow><Check s="on" />箍筋</CheckRow>
              <CheckRow><Check s="off" />上层柱插筋下插长度</CheckRow>
              <CheckRow><Check s="off" />显示其它图元</CheckRow>
              <CheckRow><Check s="off" />显示详细公式</CheckRow>
            </CheckBoxList>
          </ControlPanel>
          <Tip>点击图标可调节提示信息位置~<TipMute>不再提示</TipMute></Tip>
          <ViewBar>
            <ViewBtn>{ViewIcons[0]}</ViewBtn>
            <ViewBtn><TwoDWrap>{ViewIcons[1]}<TwoD>2D</TwoD></TwoDWrap></ViewBtn>
            <ViewBtn><Ic w={22} h={22}><path d="M2 6h15v15H3a1 1 0 0 1-1-1zM2 6l4-4h15v15l-4 4M17 6l4-4" stroke={DK} /><path d="M2 6l4-4h15l-4 4z" fill={LB} stroke={BL} /></Ic></ViewBtn>
            <ViewCaret />
            <ViewBtn><Ic w={22} h={22}><path d="M2 6h15v15H3a1 1 0 0 1-1-1zM2 6l4-4h15v15l-4 4M17 6l4-4" stroke={BL} fill={LB} /></Ic></ViewBtn>
            <ViewCaret />
            <ViewBtn><Ic w={22} h={22}><path d="M7 2H3a1 1 0 0 0-1 1v4M15 2h4a1 1 0 0 1 1 1v4M7 20H3a1 1 0 0 1-1-1v-4M15 20h4a1 1 0 0 0 1-1v-4" stroke={DK} /></Ic></ViewBtn>
            <ViewBtn><Ic w={22} h={22}><rect x="1.500" y="1.500" width="19" height="19" rx="2" stroke={DK} strokeDasharray="2.500 1.500" /><path d="M11 5l5.500 3v6L11 17l-5.500-3V8zM5.500 8L11 11l5.500-3M11 11v6" stroke={BL} strokeWidth={1.2} /></Ic></ViewBtn>
            <ViewRule />
            <ViewBtn><Ic w={22} h={22}><path d="M20 12V2H2v19h10M5 7h12M5 11h7M5 15h4" stroke={DK} /><ellipse cx="17" cy="17" rx="4.500" ry="3" stroke={BL} /><circle cx="17" cy="17" r="1" fill={BL} /></Ic></ViewBtn>
          </ViewBar>
        </Canvas>

        <Splitter><SplitHandle /></Splitter>

        <RightPanel>
          <CloseStrip />
          <RightTitle>显示设置</RightTitle>
          <RightTabs><RightTab $on>图元显示</RightTab><RightTab>楼层显示</RightTab></RightTabs>
          <LayerWrap>
            <LayerHead><LayerHeadName>图层构件</LayerHeadName><LayerHeadValue>显示图元</LayerHeadValue></LayerHead>
            {layerData.map(([t, l, s], i) => (
              <LayerRowBox key={i}>
                <LayerName $l={l}>
                  {l > 0 && <LayerGuide $x={8} />}
                  {l === 2 && <LayerGuide $x={18} $tick />}
                  {l < 2 && <LayerBox />}
                  {t}
                </LayerName>
                <LayerCheckCell $sel={i === 10}><Check s={s} /></LayerCheckCell>
              </LayerRowBox>
            ))}
          </LayerWrap>
          <CornerBtn />
        </RightPanel>
      </Main>

      <Footer>
        <FootBtn $w={23} />
        <FootBtn $w={35} $on />
        <FootBtn $w={23} />
        <FootBtn $w={35} />
        <FootBtn $w={33} />
        <FootBtn $w={22} />
        <FootBtn $w={23} />
      </Footer>
    </Page>
  );
}
